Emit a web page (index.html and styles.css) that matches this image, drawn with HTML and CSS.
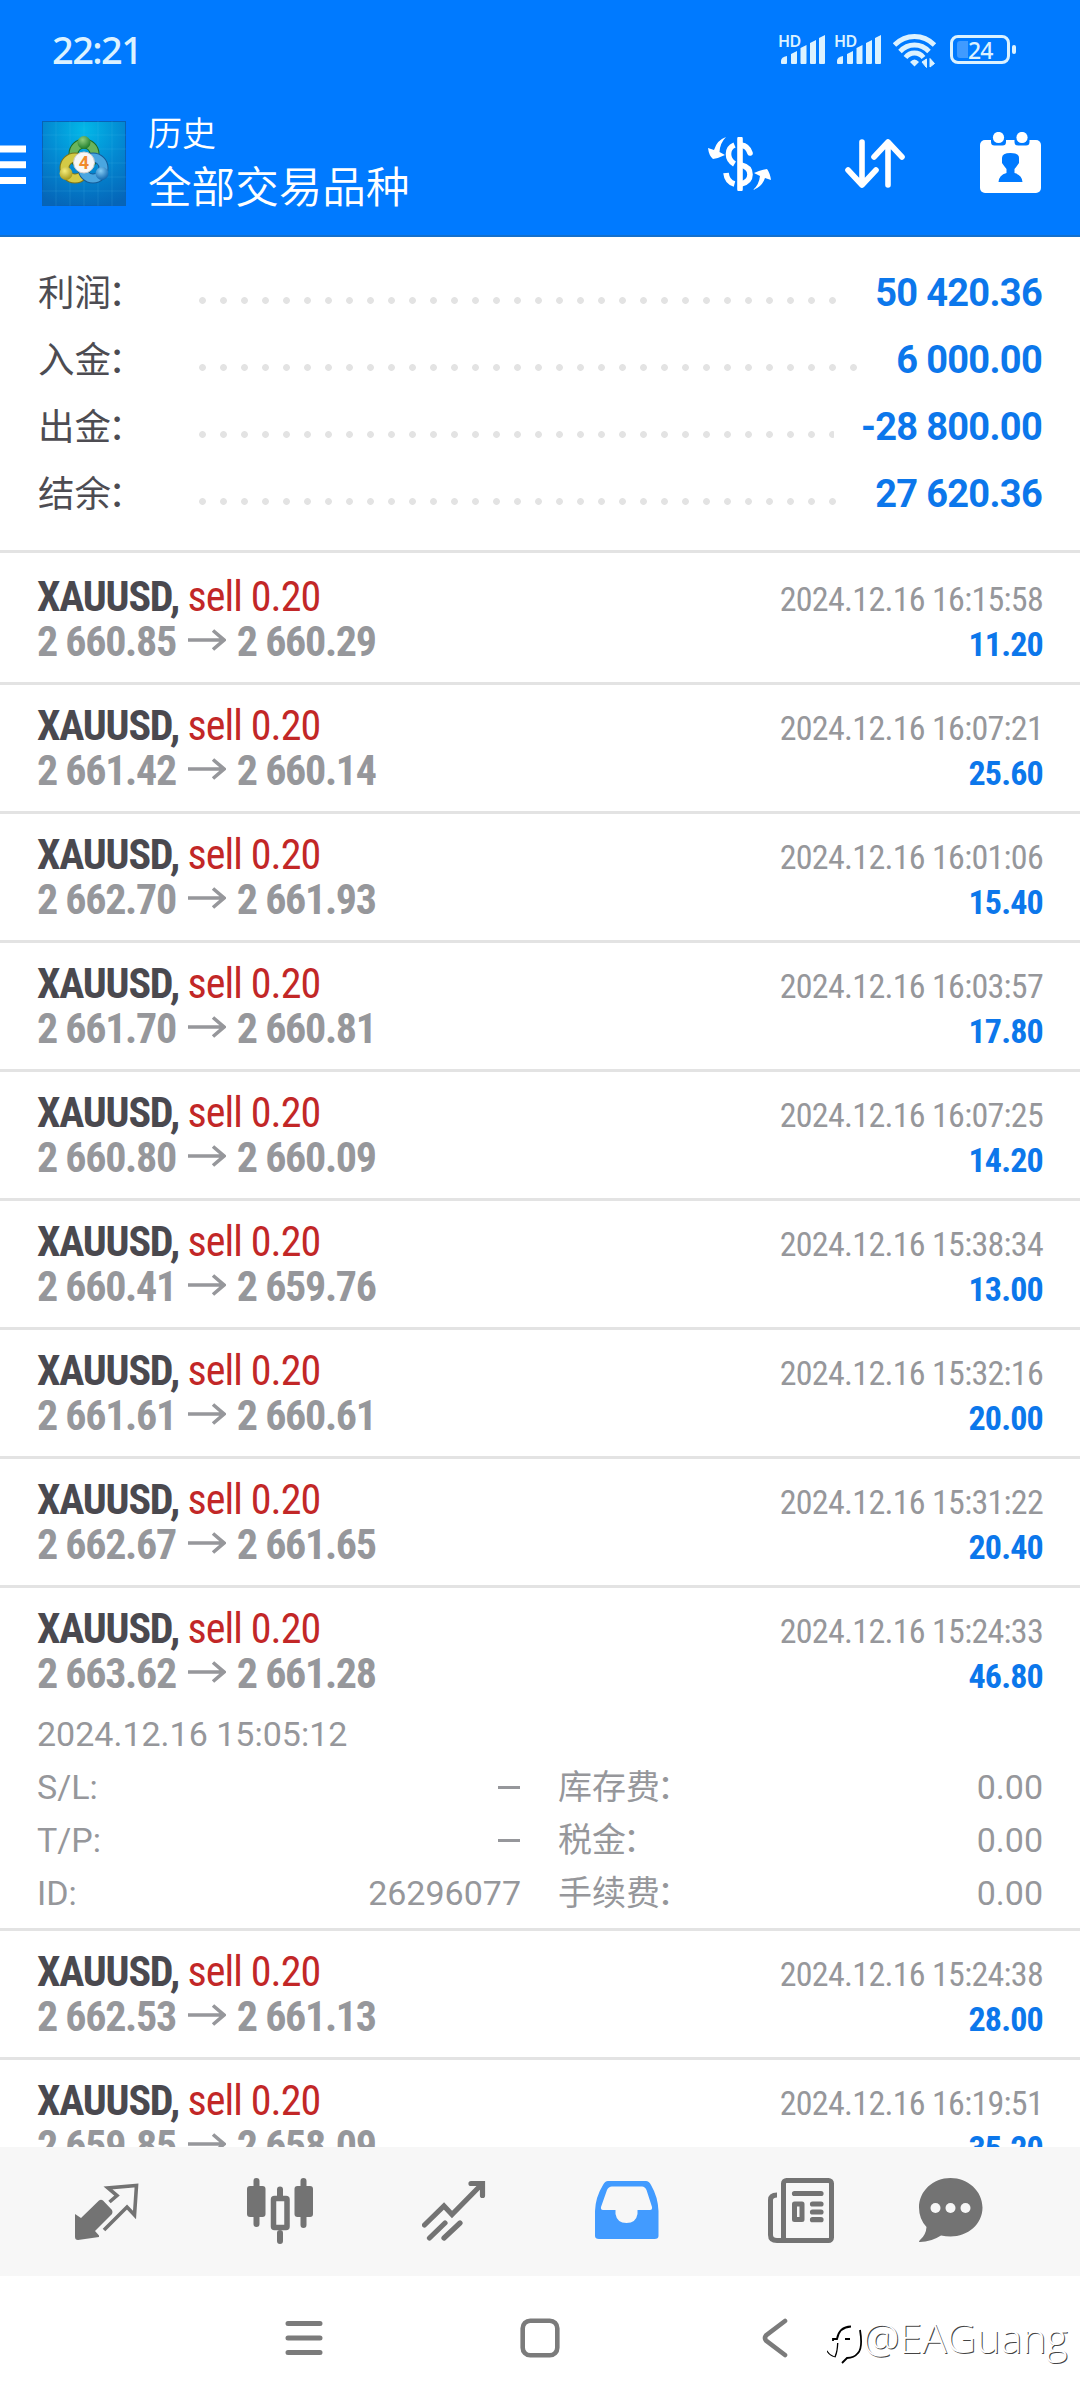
FILE: index.html
```
<!DOCTYPE html>
<html lang="zh-CN">
<head>
    <meta charset="UTF-8">
    <meta name="viewport" content="width=device-width, initial-scale=1.0">
    <title>历史</title>
    <link rel="stylesheet" href="styles.css">
</head>
<body>
    <svg class="defs" width="0" height="0">
        <symbol id="arrow" viewBox="0 0 38 22">
            <path d="M0 11H36M25 1.5L36 11L25 20.500" fill="none" stroke="#96979b" stroke-width="3.600"/>
        </symbol>
        <symbol id="signal" viewBox="0 0 46 30">
            <path d="M2 27q0-4 6-5v7q0 1-1 1H3q-1 0-1-1zM12 20l6-3v12q0 1-1 1h-4q-1 0-1-1zM21.500 14l6-3v18q0 1-1 1h-4q-1 0-1-1zM31 9l6-3v23q0 1-1 1h-4q-1 0-1-1zM40 4l6-3v28q0 1-1 1h-4q-1 0-1-1z" fill="#dcf2ff"/>
        </symbol>
    </svg>

    <header class="header">
        <div class="status">
            <span class="time">22:21</span>
            <div class="status-icons">
                <div class="sim"><span class="hd">HD</span><svg width="46" height="30"><use href="#signal"/></svg></div>
                <div class="sim"><span class="hd">HD</span><svg width="46" height="30"><use href="#signal"/></svg></div>
                <svg class="wifi" width="44" height="34" viewBox="0 0 44 34">
                    <g fill="none" stroke="#dcf2ff" stroke-width="4.800">
                        <path d="M1.500 11Q10 2.500 21.500 2.500T41.500 11"/>
                        <path d="M7 17.500Q13 11 21.500 11T36 17.500"/>
                        <path d="M12.500 23.500Q16 19 21.500 19T30.500 23.500"/>
                    </g>
                    <path d="M17 28q4.500-5 9 0l-4.500 4.500z" fill="#dcf2ff"/>
                    <path d="M29 28l4.500 5.500V25zM33 26v7M41.500 29.500L37 24.500V33zM37.500 25v8" fill="#dcf2ff" stroke="#dcf2ff" stroke-width="1"/>
                </svg>
                <div class="battery"><div class="level"></div><span>24</span></div>
            </div>
        </div>

        <div class="toolbar">
            <svg class="menu" width="26" height="40" viewBox="0 0 26 40">
                <path d="M0 4h26M0 19.700h26M0 35.500h26" stroke="#fff" stroke-width="7"/>
            </svg>
            <svg class="logo" width="84" height="85" viewBox="0 0 84 85">
                <defs>
                    <radialGradient id="sky" cx=".5" cy=".1" r=".95">
                        <stop offset="0" stop-color="#02b8e8"/>
                        <stop offset=".5" stop-color="#0389d2"/>
                        <stop offset="1" stop-color="#0565b8"/>
                    </radialGradient>
                    <radialGradient id="green" cx=".4" cy=".3" r=".7"><stop offset="0" stop-color="#8fce7c"/><stop offset="1" stop-color="#1f7d2c"/></radialGradient>
                    <radialGradient id="yellow" cx=".4" cy=".3" r=".7"><stop offset="0" stop-color="#f6ee7c"/><stop offset="1" stop-color="#a79a1c"/></radialGradient>
                    <radialGradient id="blue" cx=".4" cy=".3" r=".7"><stop offset="0" stop-color="#86cdf5"/><stop offset="1" stop-color="#1268b0"/></radialGradient>
                </defs>
                <rect x=".5" y=".5" width="83" height="84" fill="url(#sky)" stroke="#0a62b4"/>
                <path d="M0 14h84M0 28h84M0 42h84M0 56h84M0 70h84M14 0v85M28 0v85M42 0v85M56 0v85M70 0v85" stroke="#5fc8f0" stroke-opacity=".15"/>
                <g fill="none" stroke-width="8">
                    <circle cx="42" cy="33" r="10.500" stroke="#1d6a24" stroke-width="10"/>
                    <circle cx="42" cy="33" r="10.500" stroke="#69b45c"/>
                    <circle cx="33" cy="47" r="10.500" stroke="#7d7418" stroke-width="10"/>
                    <circle cx="33" cy="47" r="10.500" stroke="#d3ca45"/>
                    <circle cx="51" cy="47" r="10.500" stroke="#155b98" stroke-width="10"/>
                    <circle cx="51" cy="47" r="10.500" stroke="#4aa6e0"/>
                </g>
                <circle cx="42" cy="21.500" r="6.500" fill="url(#green)"/>
                <circle cx="24" cy="52.500" r="6.500" fill="url(#yellow)"/>
                <circle cx="60" cy="52.500" r="6.500" fill="url(#blue)"/>
                <circle cx="42" cy="41.500" r="10.500" fill="#f7f7f7" stroke="#ccc"/>
                <text x="42" y="48" class="logo-num">4</text>
            </svg>
            <div class="titles">
                <div class="title">历史</div>
                <div class="subtitle">全部交易品种</div>
            </div>
            <div class="actions">
                <svg width="64" height="54" viewBox="0 0 64 54">
                    <path d="M32 2V52" stroke="#fff" stroke-width="5.600" stroke-linecap="round"/>
                    <path d="M26.500 8Q20.500 10.500 20.500 17T26.500 27M26.500 47Q19 45 18 36" fill="none" stroke="#fff" stroke-width="5.600"/>
                    <path d="M33 8Q40 9 42 16M33 28Q42 30 42 37.500T33 47" fill="none" stroke="#fff" stroke-width="5.600" stroke-linecap="round"/>
                    <path d="M18 0Q9 3 6 13L0 11Q1 19 5 22Q11 21 17 18L11.500 15Q12 6 18 0z" fill="#fff"/>
                    <path d="M45 53Q54 50 57 41L63 43Q62 36 59 32Q52 33 46 36L52 39Q51 48 45 53z" fill="#fff"/>
                </svg>
                <svg width="60" height="50" viewBox="0 0 60 50">
                    <path d="M17 3V46M3 31L17 46L31 31M43 46V3M29 18L43 3L57 18" fill="none" stroke="#fff" stroke-width="5.600" stroke-linecap="round" stroke-linejoin="round"/>
                </svg>
                <svg width="62" height="62" viewBox="0 0 62 62">
                    <rect x="0" y="8" width="61" height="53" rx="5" fill="#fff"/>
                    <path d="M11 6h15v4q0 3.500-3.500 3.500h-8Q11 13.500 11 10zM34.500 6h15v4q0 3.500-3.500 3.500h-8q-3.500 0-3.500-3.500z" fill="#007aff"/>
                    <circle cx="18.500" cy="5.500" r="5.600" fill="#fff"/>
                    <circle cx="42" cy="5.500" r="5.600" fill="#fff"/>
                    <path d="M22 26Q22 21 30.500 21T39 26V31Q37 34 34.500 37V41Q42 43 42.500 50H18.500Q19 43 26.500 41V37Q24 34 22 31z" fill="#007aff"/>
                </svg>
            </div>
        </div>
    </header>

    <main class="content">
        <section class="summary">
            <div class="sum-row"><span class="sum-label">利润<i>：</i></span><span class="dots"></span><span class="sum-value">50 420.36</span></div>
            <div class="sum-row"><span class="sum-label">入金<i>：</i></span><span class="dots"></span><span class="sum-value">6 000.00</span></div>
            <div class="sum-row"><span class="sum-label">出金<i>：</i></span><span class="dots"></span><span class="sum-value">-28 800.00</span></div>
            <div class="sum-row"><span class="sum-label">结余<i>：</i></span><span class="dots"></span><span class="sum-value">27 620.36</span></div>
        </section>

        <section class="deals">
            <div class="deal">
                <div class="line"><span class="symbol"><b>XAUUSD,</b> <span class="sell">sell 0.20</span></span><span class="date">2024.12.16 16:15:58</span></div>
                <div class="line"><span class="price"><span>2 660.85</span><svg class="arrow"><use href="#arrow"/></svg><span>2 660.29</span></span><span class="profit">11.20</span></div>
            </div>
            <div class="deal">
                <div class="line"><span class="symbol"><b>XAUUSD,</b> <span class="sell">sell 0.20</span></span><span class="date">2024.12.16 16:07:21</span></div>
                <div class="line"><span class="price"><span>2 661.42</span><svg class="arrow"><use href="#arrow"/></svg><span>2 660.14</span></span><span class="profit">25.60</span></div>
            </div>
            <div class="deal">
                <div class="line"><span class="symbol"><b>XAUUSD,</b> <span class="sell">sell 0.20</span></span><span class="date">2024.12.16 16:01:06</span></div>
                <div class="line"><span class="price"><span>2 662.70</span><svg class="arrow"><use href="#arrow"/></svg><span>2 661.93</span></span><span class="profit">15.40</span></div>
            </div>
            <div class="deal">
                <div class="line"><span class="symbol"><b>XAUUSD,</b> <span class="sell">sell 0.20</span></span><span class="date">2024.12.16 16:03:57</span></div>
                <div class="line"><span class="price"><span>2 661.70</span><svg class="arrow"><use href="#arrow"/></svg><span>2 660.81</span></span><span class="profit">17.80</span></div>
            </div>
            <div class="deal">
                <div class="line"><span class="symbol"><b>XAUUSD,</b> <span class="sell">sell 0.20</span></span><span class="date">2024.12.16 16:07:25</span></div>
                <div class="line"><span class="price"><span>2 660.80</span><svg class="arrow"><use href="#arrow"/></svg><span>2 660.09</span></span><span class="profit">14.20</span></div>
            </div>
            <div class="deal">
                <div class="line"><span class="symbol"><b>XAUUSD,</b> <span class="sell">sell 0.20</span></span><span class="date">2024.12.16 15:38:34</span></div>
                <div class="line"><span class="price"><span>2 660.41</span><svg class="arrow"><use href="#arrow"/></svg><span>2 659.76</span></span><span class="profit">13.00</span></div>
            </div>
            <div class="deal">
                <div class="line"><span class="symbol"><b>XAUUSD,</b> <span class="sell">sell 0.20</span></span><span class="date">2024.12.16 15:32:16</span></div>
                <div class="line"><span class="price"><span>2 661.61</span><svg class="arrow"><use href="#arrow"/></svg><span>2 660.61</span></span><span class="profit">20.00</span></div>
            </div>
            <div class="deal">
                <div class="line"><span class="symbol"><b>XAUUSD,</b> <span class="sell">sell 0.20</span></span><span class="date">2024.12.16 15:31:22</span></div>
                <div class="line"><span class="price"><span>2 662.67</span><svg class="arrow"><use href="#arrow"/></svg><span>2 661.65</span></span><span class="profit">20.40</span></div>
            </div>
            <div class="deal open">
                <div class="line"><span class="symbol"><b>XAUUSD,</b> <span class="sell">sell 0.20</span></span><span class="date">2024.12.16 15:24:33</span></div>
                <div class="line"><span class="price"><span>2 663.62</span><svg class="arrow"><use href="#arrow"/></svg><span>2 661.28</span></span><span class="profit">46.80</span></div>
                <div class="details">
                    <div class="open-time">2024.12.16 15:05:12</div>
                    <div class="cell"><span>S/L:</span><span class="dash"></span></div>
                    <div class="cell"><span class="cn">库存费<i>：</i></span><span>0.00</span></div>
                    <div class="cell"><span>T/P:</span><span class="dash"></span></div>
                    <div class="cell"><span class="cn">税金<i>：</i></span><span>0.00</span></div>
                    <div class="cell"><span>ID:</span><span>26296077</span></div>
                    <div class="cell"><span class="cn">手续费<i>：</i></span><span>0.00</span></div>
                </div>
            </div>
            <div class="deal">
                <div class="line"><span class="symbol"><b>XAUUSD,</b> <span class="sell">sell 0.20</span></span><span class="date">2024.12.16 15:24:38</span></div>
                <div class="line"><span class="price"><span>2 662.53</span><svg class="arrow"><use href="#arrow"/></svg><span>2 661.13</span></span><span class="profit">28.00</span></div>
            </div>
            <div class="deal">
                <div class="line"><span class="symbol"><b>XAUUSD,</b> <span class="sell">sell 0.20</span></span><span class="date">2024.12.16 16:19:51</span></div>
                <div class="line"><span class="price"><span>2 659.85</span><svg class="arrow"><use href="#arrow"/></svg><span>2 658.09</span></span><span class="profit">35.20</span></div>
            </div>
        </section>
    </main>

    <nav class="tabs">
        <div class="tab">
            <svg width="64" height="66" viewBox="0 0 64 66">
                <path d="M0 36L6 40L24 22.500Q26 21 28 22.500L37 32Q38 34 37 36L20 53L24 57.500V59L3 62Q0 62 0 59z" fill="#737373"/>
                <path d="M34.500 24L42 17.500L33 10L61.500 7.500L59.500 37L52 29L29 52" fill="none" stroke="#737373" stroke-width="3.600"/>
            </svg>
        </div>
        <div class="tab">
            <svg width="66" height="66" viewBox="0 0 66 66">
                <path d="M9.500 3V46M56.500 3V47M33 11.500V18M33 55V63" stroke="#737373" stroke-width="6" stroke-linecap="round"/>
                <rect x="0" y="8" width="18.500" height="31" rx="3" fill="#737373"/>
                <rect x="47.500" y="8" width="18.500" height="31" rx="3" fill="#737373"/>
                <rect x="26.500" y="20.500" width="13.500" height="29" rx="1" fill="#f7f7f7" stroke="#737373" stroke-width="5.500"/>
            </svg>
        </div>
        <div class="tab">
            <svg width="64" height="66" viewBox="0 0 64 66">
                <path d="M2.500 47L22 28L30 36.500L60 6M49 5.500H60.500V17.500M7.500 60L23 45M22 60L38 45" fill="none" stroke="#737373" stroke-width="5.200" stroke-linecap="round"/>
            </svg>
        </div>
        <div class="tab">
            <svg width="64" height="66" viewBox="0 0 64 66">
                <path d="M13 3H51Q54 3 56 7Q63 19 63.500 33V58Q63.500 61 59.500 61H4Q0 61 0 58V33Q.500 19 8 7Q10 3 13 3z" fill="#429bff"/>
                <path d="M17 8.500H47Q50 8.500 51.500 12L57 29Q57.500 32 55 32H42.500V36Q41 45 31.500 45T20.500 36V32H8Q5.500 32 6 29L12 12Q13.500 8.500 17 8.500z" fill="#f7f7f7"/>
            </svg>
        </div>
        <div class="tab">
            <svg width="66" height="66" viewBox="0 0 66 66">
                <rect x="15.500" y="2.500" width="48" height="60" rx="3" fill="none" stroke="#737373" stroke-width="5"/>
                <path d="M9 17Q2.500 17 2.500 22V57Q2.500 62.500 9 62.500H18" fill="none" stroke="#737373" stroke-width="5"/>
                <path d="M26.500 15.500H53M44.500 26H53M44.500 34H53M44.500 41.700H53" stroke="#737373" stroke-width="5.200" stroke-linecap="round"/>
                <rect x="26.500" y="26" width="7.500" height="15.500" fill="none" stroke="#737373" stroke-width="5" stroke-linejoin="round"/>
            </svg>
        </div>
        <div class="tab last">
            <svg width="64" height="66" viewBox="0 0 64 66">
                <path d="M31.500 0C49 0 63.500 13 63.500 29.500S49 58.500 31.500 58.500Q27 58.500 22 57.500Q12 64 1 64Q-1 64 1 62Q7 57 7.500 49Q0 41 0 29.500C0 13 14 0 31.500 0z" fill="#737373"/>
                <circle cx="16.500" cy="30" r="5" fill="#f7f7f7"/>
                <circle cx="31.500" cy="30" r="5" fill="#f7f7f7"/>
                <circle cx="46.500" cy="30" r="5" fill="#f7f7f7"/>
            </svg>
        </div>
    </nav>

    <footer class="system-nav">
        <svg width="38" height="40" viewBox="0 0 38 40">
            <path d="M3 5.500H35M3 20H35M3 34.500H35" stroke="#7b7b7b" stroke-width="5" stroke-linecap="round"/>
        </svg>
        <svg width="40" height="40" viewBox="0 0 40 40">
            <rect x="2.700" y="2.700" width="34.600" height="34.600" rx="7.500" fill="none" stroke="#7b7b7b" stroke-width="4.600"/>
        </svg>
        <svg width="26" height="40" viewBox="0 0 26 40">
            <path d="M23 3L4 17.500Q2 20 4 22.500L23 37" fill="none" stroke="#7b7b7b" stroke-width="4.600" stroke-linecap="round"/>
        </svg>
        <div class="watermark">
            <svg width="36" height="42" viewBox="0 0 36 42">
                <path d="M0 26Q2 31 8 32.500Q10 28 10.500 19M6 17V15H10Q12 3 24 2.500M18 15H23M33 6Q36 24 31 29Q27 34 20 34L15 39" fill="none" stroke="#000" stroke-width="1.800"/>
                <path d="M0 24Q2 29 7 31Q9 26 9 19" fill="none" stroke="#fff" stroke-width="2"/>
            </svg>
            <span>@EAGuang</span>
        </div>
    </footer>
</body>
</html>
```
FILE: styles.css
```
* {
    box-sizing: border-box;
}

body {
    margin: 0;
    width: 1080px;
    height: 2400px;
    overflow: hidden;
    display: flex;
    flex-direction: column;
    background-color: white;
    font-family: Roboto, "Noto Sans CJK SC", sans-serif;
}

svg {
    display: block;
    flex: none;
}

.defs {
    position: absolute;
}

/* header */

.header {
    height: 237px;
    flex: none;
    background-color: #007aff;
    border-bottom: 2px solid #1470cc;
    color: white;
}

.status {
    height: 100px;
    display: flex;
    justify-content: space-between;
    padding: 0 64px 0 52px;
    color: #dcf2ff;
}

.time {
    font-family: "Noto Sans", sans-serif;
    font-size: 38px;
    font-weight: 500;
    line-height: 98px;
    letter-spacing: -1.6px;
}

.status-icons {
    display: flex;
    align-items: flex-start;
    padding-top: 34px;
}

.sim {
    position: relative;
    margin-right: 10px;
}

.hd {
    position: absolute;
    left: -1px;
    top: 0;
    font-family: "Noto Sans", sans-serif;
    font-size: 16px;
    line-height: 15px;
    font-weight: 600;
    letter-spacing: -0.5px;
}

.wifi {
    margin: 0 13px 0 2px;
}

.battery {
    position: relative;
    width: 60px;
    height: 29px;
    margin-top: 1px;
    border: 3px solid #dcf2ff;
    border-radius: 8px;
    display: flex;
    align-items: center;
    padding-left: 4px;
    margin-right: 6px;
}

.battery::after {
    content: "";
    position: absolute;
    right: -9px;
    top: 7px;
    width: 4px;
    height: 9px;
    border-radius: 2px;
    background-color: #dcf2ff;
}

.battery span {
    font-family: "Noto Sans", sans-serif;
    font-size: 23px;
    line-height: 22px;
    font-weight: 500;
    letter-spacing: -1px;
}

.level {
    width: 11px;
    height: 17px;
    border-radius: 3px 0 0 3px;
    background-color: #409bff;
}

.toolbar {
    display: flex;
    height: 135px;
    padding-right: 38px;
}

.menu {
    margin: 45px 16px 0 0;
}

.logo {
    margin-top: 21px;
}

.logo-num {
    font-size: 18px;
    font-weight: 700;
    fill: #f08a2c;
    text-anchor: middle;
}

.titles {
    margin-left: 22px;
    font-weight: 350;
}

.title {
    margin-top: 14px;
    font-size: 34px;
    line-height: 40px;
}

.subtitle {
    font-size: 43.6px;
    line-height: 69px;
}

.actions {
    margin-left: auto;
    display: flex;
    gap: 75px;
    padding-top: 32px;
}

.actions svg:nth-child(1) {
    margin: 5px -2px 0 0;
}

.actions svg:nth-child(2) {
    margin-top: 7px;
}

/* totals */

.content {
    height: 1910px;
    overflow: hidden;
    flex: none;
}

.summary {
    height: 316px;
    padding: 23px 37px 0 38px;
    border-bottom: 3px solid #e3e3e3;
}

.sum-row {
    display: flex;
    height: 67px;
    line-height: 67px;
}

.sum-label {
    width: 161px;
    font-size: 36.5px;
    color: #4d4c52;
}

.sum-label i,
.cn i {
    font-style: normal;
    margin-left: -3px;
}

.dots {
    flex: 1;
    margin: 37px 27px 0 0;
    height: 7px;
    background: radial-gradient(circle at 3.5px 3.5px, #e3e3e3 3px, transparent 3.8px) 0 0 / 21px 7px repeat-x;
}

.sum-value {
    font-size: 38px;
    font-weight: 700;
    letter-spacing: -0.7px;
    margin-right: 1px;
    color: #0c77eb;
}

/* deals */

.deals {
    padding-top: 3px;
}

.deal {
    height: 129px;
    padding: 18px 37px 0;
    border-bottom: 3px solid #e3e3e3;
}

.deal.open {
    height: 343px;
}

.line {
    display: flex;
    justify-content: space-between;
    align-items: baseline;
    height: 45px;
    line-height: 45px;
    font-stretch: 75%;
}

.symbol {
    font-size: 42px;
    letter-spacing: -1.2px;
    color: #4a494f;
}

.sell {
    letter-spacing: -0.9px;
    color: #c22727;
}

.price {
    display: flex;
    font-size: 42px;
    font-weight: 700;
    letter-spacing: -1.3px;
    color: #96979b;
}

.arrow {
    width: 38px;
    height: 22px;
    margin: 10px 11px 0 12px;
}

.date {
    font-size: 34px;
    letter-spacing: -0.7px;
    color: #96979b;
}

.profit {
    font-size: 34px;
    font-weight: 700;
    letter-spacing: -0.8px;
    color: #0c77eb;
}

.details {
    display: grid;
    grid-template-columns: 1fr 1fr;
    column-gap: 38px;
    margin-top: 12px;
    font-size: 34px;
    line-height: 53px;
    color: #96979b;
}

.open-time {
    grid-column: 1 / 3;
}

.cell {
    display: flex;
    justify-content: space-between;
    height: 53px;
}

.cn {
    margin-left: -1px;
}

.dash {
    width: 22px;
    height: 3px;
    margin: 25px 1px 0 0;
    background-color: #96979b;
}

/* bottom */

.tabs {
    display: flex;
    flex: none;
    height: 129px;
    padding-left: 20px;
    background-color: #f7f7f7;
}

.tab {
    width: 173.5px;
    padding-top: 31px;
    display: flex;
    justify-content: center;
}

.tab.last {
    width: 126px;
}

.system-nav {
    display: flex;
    height: 124px;
    padding: 42px 0 0 285px;
}

.system-nav svg:nth-child(2) {
    margin-left: 197px;
}

.system-nav svg:nth-child(3) {
    margin-left: 202px;
}

.watermark {
    display: flex;
    margin: 6px 0 0 39px;
    color: white;
}

.watermark span {
    font-family: "Open Sans", sans-serif;
    font-size: 41px;
    font-weight: 300;
    line-height: 26px;
    text-shadow: 1px 1px 0 #444;
}
```
